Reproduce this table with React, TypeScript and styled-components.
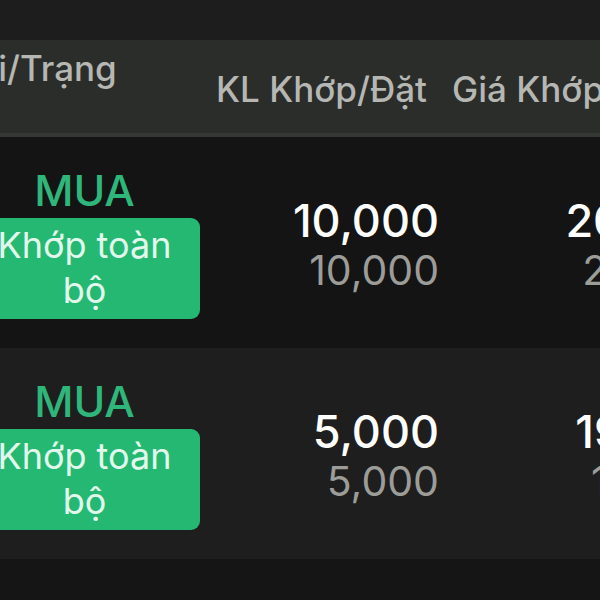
import styled, { createGlobalStyle } from 'styled-components'

const GlobalStyle = createGlobalStyle`
  html,
  body {
    margin: 0;
    padding: 0;
    width: 600px;
    height: 600px;
    overflow: hidden;
    background: #141514;
  }
  body {
    font-family: Inter, 'Noto Sans', sans-serif;
  }
`

const Screen = styled.div`
  width: 600px;
  height: 600px;
  overflow: hidden;
  background: #141514;
`

const TopBar = styled.div`
  height: 40px;
  background: #1c1d1c;
`

// table is scrolled horizontally, so its first and last columns are cut by the screen
const Table = styled.div`
  margin-left: -58px;
  width: 780px;
`

const HeaderRow = styled.div`
  display: grid;
  grid-template-columns: 275px 222px 281px;
  height: 93px;
  background: #2b2d2b;
  border-bottom: 4px solid #363836;
`

const HeadCell = styled.div<{ $align?: 'left' | 'right'; $top?: boolean; $padRight?: number }>`
  display: flex;
  align-items: ${({ $top }) => ($top ? 'flex-start' : 'center')};
  justify-content: ${({ $align }) => ($align === 'left' ? 'flex-start' : 'flex-end')};
  padding: ${({ $top, $padRight = 12 }) => ($top ? '8px 12px 0 0' : `4px ${$padRight}px 0 0`)};
  margin-left: ${({ $top }) => ($top ? '-5px' : '0')};
  color: #b6b7b3;
  font-size: 35px;
  font-weight: 500;
  line-height: 40px;
  white-space: nowrap;
`

const Row = styled.div<{ $bg: string }>`
  display: grid;
  grid-template-columns: 275px 222px 281px;
  height: 211px;
  background: ${({ $bg }) => $bg};
`

const SideCell = styled.div`
  display: flex;
  flex-direction: column;
  align-items: center;
  justify-content: center;
  gap: 4px;
  padding-left: 10px;
`

const Side = styled.div`
  color: #2fb67a;
  font-size: 43px;
  font-weight: 500;
  line-height: 48px;
`

const Status = styled.div`
  width: 230px;
  box-sizing: border-box;
  padding: 5px 6px 6px;
  border-radius: 9px;
  background: #25b873;
  color: #e3f8ec;
  font-size: 36px;
  line-height: 45px;
  text-align: center;
`

const NumCell = styled.div`
  display: flex;
  flex-direction: column;
  align-items: flex-end;
  justify-content: center;
  padding-top: 4px;
`

const Main = styled.div`
  color: #ffffff;
  font-size: 45px;
  font-weight: 500;
  line-height: 50px;
`

const Sub = styled.div`
  color: #9c9c99;
  font-size: 41px;
  line-height: 48px;
`

const orders = [
  { side: 'MUA', status: 'Khớp toàn bộ', qty: '10,000', qtyOrder: '10,000', price: '20,500', priceOrder: '20,500', bg: '#131413' },
  { side: 'MUA', status: 'Khớp toàn bộ', qty: '5,000', qtyOrder: '5,000', price: '19,800', priceOrder: '19,800', bg: '#1e1e1e' },
]

const App = () => {
  return (
    <Screen>
      <GlobalStyle />
      <TopBar />
      <Table>
        <HeaderRow>
          <HeadCell $align="left" $top>
            Loại/Trạng
            <br />
            thái
          </HeadCell>
          <HeadCell>KL Khớp/Đặt</HeadCell>
          <HeadCell $padRight={46}>Giá Khớp/Đặt</HeadCell>
        </HeaderRow>
        {orders.map((o, i) => (
          <Row key={i} $bg={o.bg}>
            <SideCell>
              <Side>{o.side}</Side>
              <Status>{o.status}</Status>
            </SideCell>
            <NumCell>
              <Main>{o.qty}</Main>
              <Sub>{o.qtyOrder}</Sub>
            </NumCell>
            <NumCell>
              <Main>{o.price}</Main>
              <Sub>{o.priceOrder}</Sub>
            </NumCell>
          </Row>
        ))}
      </Table>
    </Screen>
  )
}

export default App
